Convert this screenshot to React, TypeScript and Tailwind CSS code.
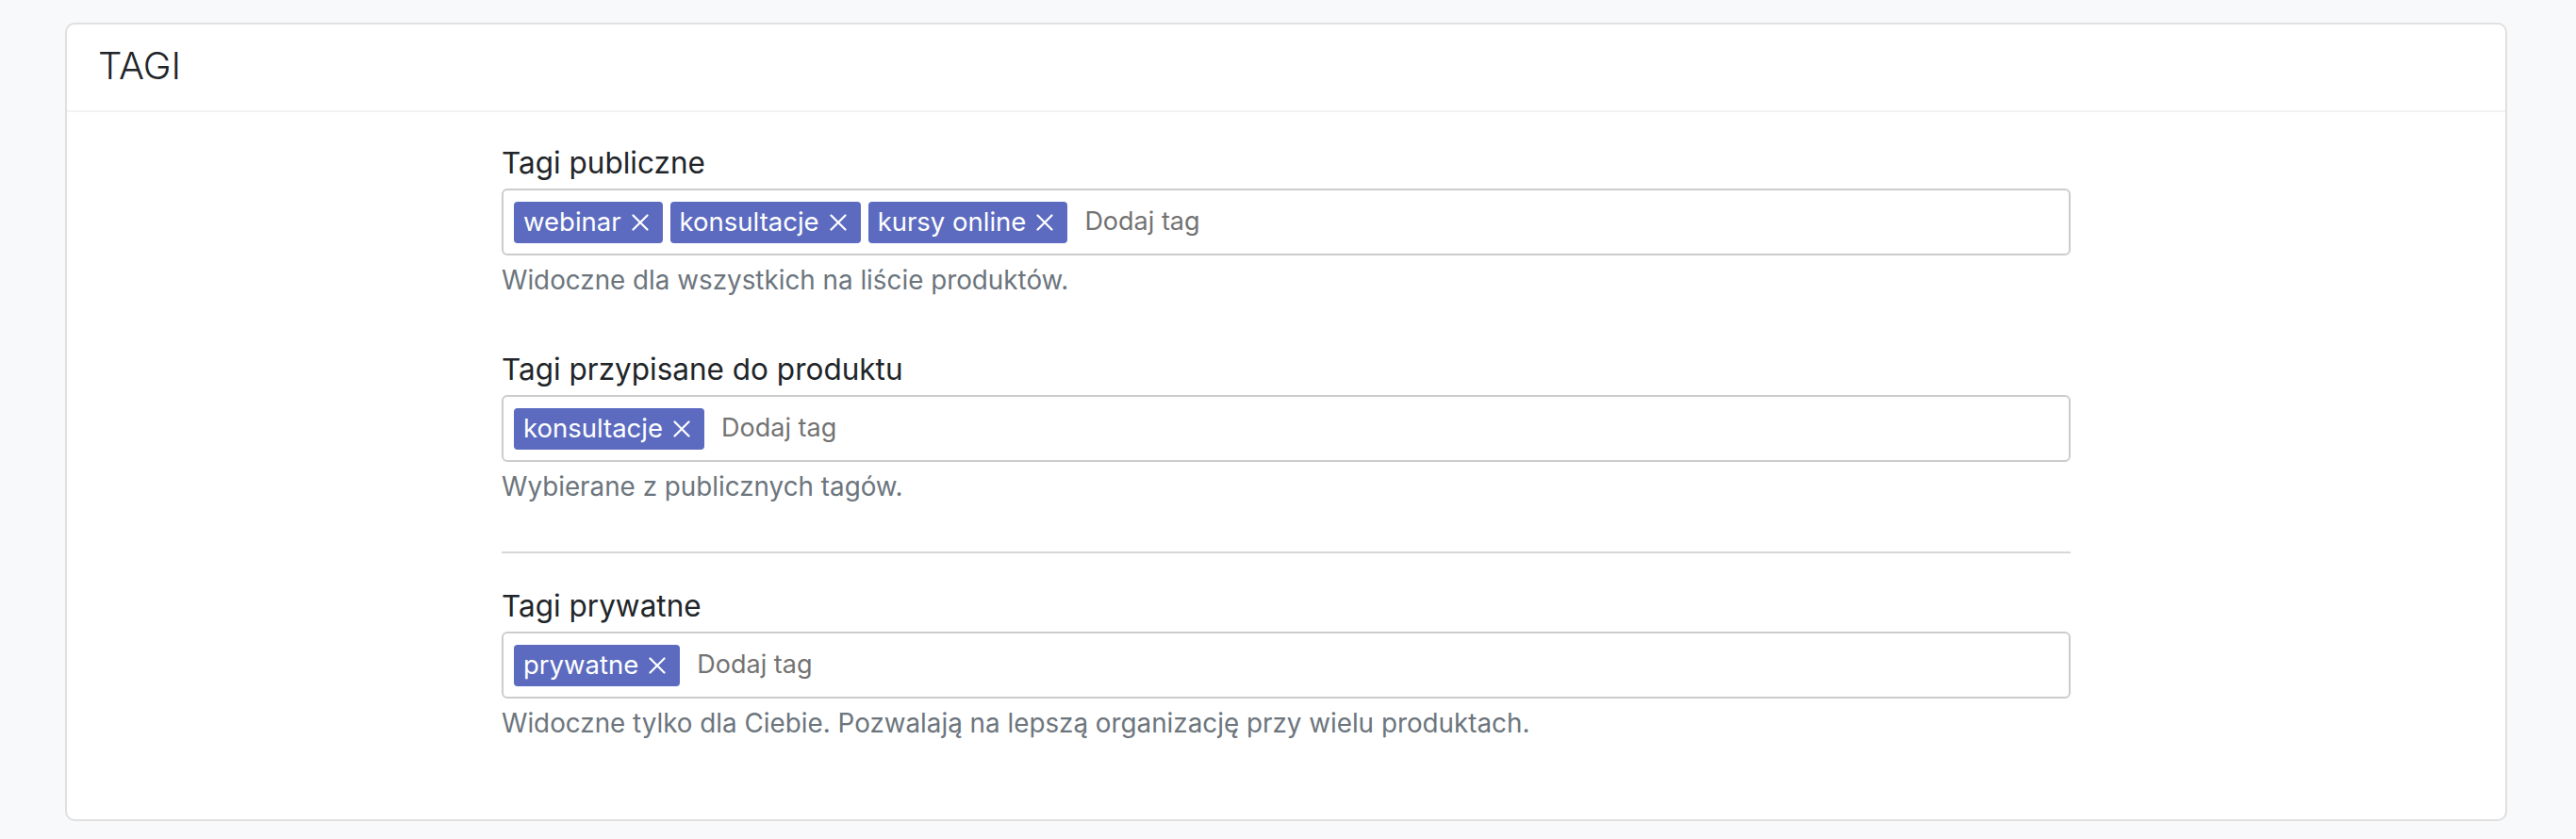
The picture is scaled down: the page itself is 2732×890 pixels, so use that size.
const groups = [
  {
    label: "Tagi publiczne",
    tags: ["webinar", "konsultacje", "kursy online"],
    help: "Widoczne dla wszystkich na liście produktów.",
  },
  {
    label: "Tagi przypisane do produktu",
    tags: ["konsultacje"],
    help: "Wybierane z publicznych tagów.",
  },
];

const privateGroup = {
  label: "Tagi prywatne",
  tags: ["prywatne"],
  help: "Widoczne tylko dla Ciebie. Pozwalają na lepszą organizację przy wielu produktach.",
};

function CloseIcon() {
  return (
    <svg width="18" height="18" viewBox="0 0 18 18" className="ml-[11px] shrink-0">
      <path d="M1.5 1.5 L16.5 16.5 M16.5 1.5 L1.5 16.5" stroke="currentColor" strokeWidth="2.2" strokeLinecap="round" />
    </svg>
  );
}

function TagField({ label, tags, help }: { label: string; tags: string[]; help: string }) {
  return (
    <div>
      <div className="text-[31.5px] leading-[42px] text-[#212529]">{label}</div>
      <div className="mt-[6px] h-[71px] flex items-center gap-[8px] border-2 border-[#cccccc] rounded-[6px] px-[11px]">
        {tags.map((t) => (
          <span
            key={t}
            className="h-[44px] flex items-center bg-[#5c6bc0] text-white rounded-[4px] pl-[10px] pr-[15px] text-[27.5px]"
          >
            {t}
            <CloseIcon />
          </span>
        ))}
        <span className="ml-[10px] text-[27px] text-[#737373]">Dodaj tag</span>
      </div>
      <div className="mt-[7px] text-[27.8px] leading-[39px] text-[#6c757d]">{help}</div>
    </div>
  );
}

export default function App() {
  return (
    <div className="min-h-[890px] bg-[#f8f9fa] pt-[24px] pl-[69px] pr-[73px] pb-[21px] font-['Inter',sans-serif]">
      <div className="bg-white border-2 border-[#e0e0e0] rounded-[10px]">
        <div className="pl-[33px] pt-[14px] pb-[17px] border-b-2 border-[#f2f2f2]">
          <h2 className="text-[40px] leading-[60px] font-light text-[#212529]">TAGI</h2>
        </div>
        <div className="w-[1664px] mx-auto pt-[33px] pb-[82px]">
          <TagField {...groups[0]} />
          <div className="mt-[54px]">
            <TagField {...groups[1]} />
          </div>
          <div className="mt-[49px] border-t-2 border-[#d6d6d6]" />
          <div className="mt-[35px]">
            <TagField {...privateGroup} />
          </div>
        </div>
      </div>
    </div>
  );
}
